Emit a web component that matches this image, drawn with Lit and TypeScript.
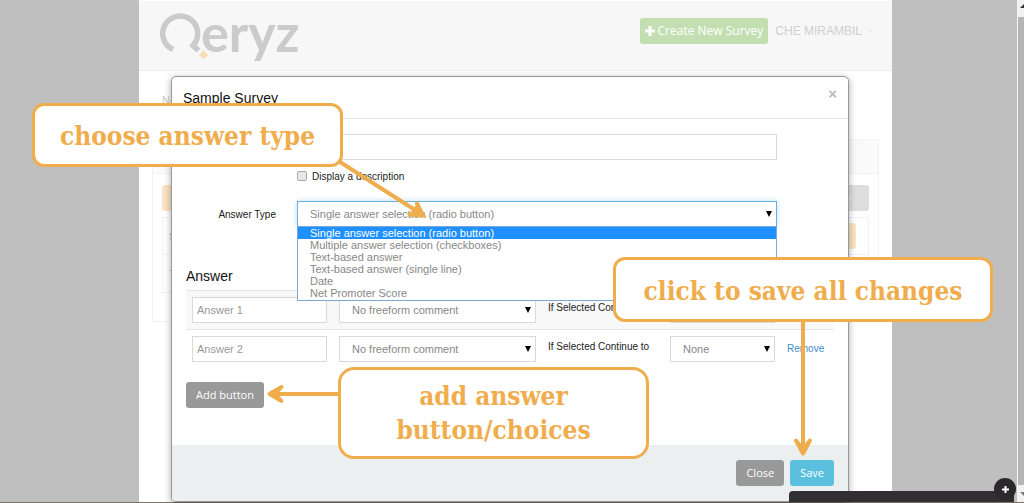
import { LitElement, html, css } from "lit";
import { customElement, state, property } from "lit/decorators.js";

const ANSWER_TYPES = [
  "Single answer selection (radio button)",
  "Multiple answer selection (checkboxes)",
  "Text-based answer",
  "Text-based answer (single line)",
  "Date",
  "Net Promoter Score",
];

const base = css`
  *, *::before, *::after { box-sizing: border-box; }
  button, input, select { font: inherit; margin: 0; }
  .field {
    display: block;
    width: 100%;
    height: 26px;
    padding: 0 4px;
    border: 1px solid #d9d9d9;
    border-radius: 0;
    background: #fff;
    color: #888;
    font-size: 11px;
    outline: none;
  }
  .field::placeholder { color: #999; opacity: 1; }
  .pick { position: relative; }
  .pick select { appearance: none; padding: 0 20px 0 12px; }
  .pick::after {
    content: "";
    position: absolute;
    right: 5px;
    top: 10px;
    border: 3px solid transparent;
    border-top: 6px solid #000;
    border-bottom: 0;
  }
`;

@customElement("survey-logo")
export class SurveyLogo extends LitElement {
  static styles = css`
    :host { display: block; }
    svg { display: block; overflow: visible; }
    .word { font: 700 52px/60px Lato, sans-serif; fill: #cbcbcb; }
  `;
  render() {
    return html`<svg width="144" height="60" viewBox="0 0 144 60" role="img" aria-label="Qeryz">
      <path d="M14 40.500 A17.500 17.500 0 1 1 34 36.500 L39.500 41.500" fill="none" stroke="#cbcbcb" stroke-width="5.500" />
      <text class="word" x="42" y="43">eryz</text>
      <path d="M44.500 41.500L49 46L44.500 50.500L40 46z" fill="#fbdcb4" />
    </svg>`;
  }
}

@customElement("answer-row")
export class AnswerRow extends LitElement {
  @property({ type: Number }) index = 1;
  @property({ type: Boolean }) removable = false;
  static styles = [base, css`
    :host {
      display: grid;
      grid-template-columns: 135px 197px 110px 105px 1fr;
      column-gap: 12px;
      align-items: center;
      height: 39px;
      padding: 0 6px;
      font-size: 10px;
      color: #222;
      white-space: nowrap;
    }
    :host([striped]) {
      background: #f8f8f8;
      box-shadow: inset 0 1px #e6e6e6, 0 1px #e6e6e6;
    }
    .goto { padding-bottom: 4px; }
    a { color: #428bca; text-decoration: none; }
  `];
  render() {
    const n = this.index;
    return html`
      <input class="field" type="text" placeholder="Answer ${n}" aria-label="Answer ${n}" />
      <div class="pick"><select class="field" aria-label="Comment for answer ${n}"><option>No freeform comment</option></select></div>
      <label class="goto" for="next">If Selected Continue to</label>
      <div class="pick"><select class="field" id="next"><option>None</option></select></div>
      ${this.removable ? html`<a href="#remove">Remove</a>` : null}`;
  }
}

@customElement("app-root")
export class AppRoot extends LitElement {
  @state() private chosen = 0;

  static styles = [base, css`
    :host {
      display: block;
      position: relative;
      min-height: 100vh;
      overflow: hidden;
      font-family: "Liberation Sans", Arial, sans-serif;
      background: #bfbfbf;
    }
    .frame {
      display: grid;
      grid-template-columns: 139fr 753fr 125fr 7px;
      min-height: 100vh;
      border-bottom: 1px solid #79736c;
    }
    .page { grid-column: 2; position: relative; background: #fff; }
    .top {
      display: flex;
      align-items: center;
      gap: 7px;
      height: 71px;
      padding: 0 18px 10px 20px;
      background: #f7f7f7;
      border-top: 1px solid #fff;
      border-bottom: 1px solid #ececec;
    }
    .logo { margin-right: auto; padding-top: 16px; }
    .create {
      display: flex;
      align-items: center;
      gap: 3px;
      height: 26px;
      padding: 0 5px;
      border: 0;
      border-radius: 3px;
      background: #c3dfb1;
      color: #fff;
      font: 12px "Open Sans", sans-serif;
      white-space: nowrap;
    }
    .user {
      display: flex;
      align-items: center;
      gap: 5px;
      color: #cfcfcf;
      font-size: 12px;
      text-decoration: none;
      white-space: nowrap;
    }
    .crumb { margin: 0; padding: 22px 23px; font-size: 11px; line-height: 14px; color: #c8c8c8; }
    .panel { margin: 10px 13px 0; border: 1px solid #f2f2f2; height: 183px; }
    .strip { height: 34px; background: #fafafa; border-bottom: 1px solid #f2f2f2; }
    .bar { display: flex; justify-content: space-between; padding: 11px 9px 6px; }
    .chip {
      width: 60px;
      height: 26px;
      padding-right: 18px;
      border-radius: 3px;
      background: #fbe3c3;
      color: #f8f8f8;
      font: 11px/26px "Open Sans", sans-serif;
      text-align: right;
    }
    .chip.grey { background: #dedede; }
    .line {
      display: flex;
      align-items: center;
      justify-content: space-between;
      height: 38px;
      margin: 0 9px;
      padding: 0 12px 0 6px;
      border: 1px solid #f2f2f2;
      font-size: 11px;
      color: #c0c0c0;
    }
    .line + .line { border-top: 0; }
    .scroll {
      grid-column: 4;
      display: flex;
      flex-direction: column;
      justify-content: space-between;
      border-left: 1px solid #f5f5f5;
      background: #b5b5b5;
    }
    .cap { display: block; width: 6px; height: 17px; background: #f1f1f1; }

    .modal {
      position: absolute;
      top: 76px;
      left: 32px;
      right: 43px;
      border: 1px solid #999;
      border-radius: 5px;
      background: #fff;
      box-shadow: 0 2px 7px rgba(0, 0, 0, .35);
      overflow: hidden;
    }
    .head {
      display: flex;
      align-items: center;
      justify-content: space-between;
      height: 42px;
      padding: 0 11px;
      border-bottom: 1px solid #e8e8e8;
    }
    .title { margin: 0; font-size: 14px; font-weight: 400; color: #111; }
    .x { padding: 0 0 8px; border: 0; background: none; font-size: 15px; font-weight: 700; line-height: 16px; color: #bbb; }
    .form {
      display: grid;
      grid-template-columns: 104px 1fr;
      column-gap: 21px;
      align-items: center;
      padding: 15px 71px 0 0;
      font-size: 10px;
      color: #222;
    }
    .form > .lab { text-align: right; }
    .check { grid-column: 2; display: flex; align-items: center; gap: 5px; height: 32px; margin-bottom: 9px; }
    .check input { width: 10px; height: 10px; appearance: none; border: 1px solid #aaa; border-radius: 2px; background: #e6e6e6; }
    .type select { border-color: #66afe9; box-shadow: 0 0 6px rgba(102, 175, 233, .4); }
    .list {
      position: absolute;
      z-index: 1;
      top: 25px;
      left: 0;
      right: 0;
      margin: 0;
      padding: 0 0 1px;
      list-style: none;
      border: 1px solid #7ba7d4;
      background: #fff;
      font-size: 11px;
      line-height: 12px;
      color: #888;
    }
    .list li { padding-left: 12px; }
    .list .on { background: #1e90ff; color: #fff; }
    .answers { padding: 41px 15px 37px 14px; }
    .answers h2 { margin: 0 0 6px; font-size: 14px; line-height: 16px; font-weight: 400; color: #111; }
    .btn {
      height: 26px;
      padding: 0 10px 1px;
      border: 0;
      border-radius: 3px;
      background: #999;
      color: #fff;
      font: 11px "Open Sans", sans-serif;
    }
    .answers .btn { display: block; margin-top: 14px; }
    .save { background: #5bc0de; }
    .foot {
      display: flex;
      justify-content: flex-end;
      gap: 6px;
      padding: 15px 14px;
      background: #ebeff0;
    }
    .dock {
      position: absolute;
      right: 10px;
      bottom: 1px;
      width: 225px;
      height: 11px;
      border-radius: 4px 0 0 0;
      background: #312f31;
    }
    .plus {
      position: absolute;
      right: 8px;
      bottom: 3px;
      width: 22px;
      height: 22px;
      padding: 0;
      border: 0;
      border-radius: 50%;
      background: #2b292b;
    }
    .plus svg { display: block; margin: 0 auto; }
    .note {
      position: absolute;
      z-index: 3;
      display: flex;
      align-items: center;
      justify-content: center;
      padding-top: 2px;
      border: 3px solid #f0ad4e;
      border-radius: 12px;
      background: #fff;
      color: #f0ad4e;
      font: 700 26px/34px "DejaVu Serif Condensed", "DejaVu Serif", serif;
      text-align: center;
      white-space: nowrap;
    }
    .n1 { left: 32px; top: 103px; width: 311px; height: 64px; }
    .n2 { left: 613px; top: 257px; width: 380px; height: 65px; }
    .n3 { left: 338px; top: 367px; width: 311px; height: 92px; padding: 0; border-radius: 16px; }
    .arrows { position: absolute; z-index: 2; top: 0; left: 0; pointer-events: none; }
  `];

  render() {
    return html`
      <div class="frame">
        <div class="page">
          <header class="top">
            <survey-logo class="logo"></survey-logo>
            <button class="create">
              <svg width="10" height="10" viewBox="0 0 10 10"><path d="M5 0v10M0 5h10" stroke="#fff" stroke-width="3" /></svg>
              Create New Survey
            </button>
            <a class="user" href="#account">CHE MIRAMBIL
              <svg width="7" height="5" viewBox="0 0 7 5"><path d="M1 1l2.500 2.500L6 1" fill="none" stroke="#d5e2f0" /></svg>
            </a>
          </header>
          <p class="crumb">Na</p>
          <section class="panel">
            <div class="strip"></div>
            <div class="bar"><span class="chip"></span><span class="chip grey">View</span></div>
            <div class="line">S<span class="chip"></span></div>
            <div class="line">T</div>
          </section>

          <section class="modal" role="dialog" aria-labelledby="title">
            <div class="head">
              <h1 class="title" id="title">Sample Survey</h1>
              <button class="x" aria-label="Close dialog">×</button>
            </div>
            <div class="form">
              <span class="lab"></span>
              <input class="field" type="text" aria-label="Question" />
              <label class="check"><input type="checkbox" />Display a description</label>
              <label class="lab" for="type">Answer Type</label>
              <div class="pick type">
                <select class="field" id="type" @change=${(e: Event) => (this.chosen = (e.target as HTMLSelectElement).selectedIndex)}>
                  ${ANSWER_TYPES.map((t) => html`<option>${t}</option>`)}
                </select>
                <ul class="list" role="listbox" aria-label="Answer types">
                  ${ANSWER_TYPES.map((t, i) => html`<li role="option" class=${i === this.chosen ? "on" : ""}>${t}</li>`)}
                </ul>
              </div>
            </div>
            <div class="answers">
              <h2>Answer</h2>
              <answer-row striped .index=${1}></answer-row>
              <answer-row .index=${2} removable></answer-row>
              <button class="btn">Add button</button>
            </div>
            <div class="foot">
              <button class="btn">Close</button>
              <button class="btn save">Save</button>
            </div>
          </section>
        </div>
        <div class="scroll">
          <svg class="cap" viewBox="0 0 6 17"><path d="M2 8l4-4v4z" fill="#333" /></svg>
          <svg class="cap" viewBox="0 0 6 17"><path d="M2 7h4v4z" fill="#777" /></svg>
        </div>
      </div>

      <div class="dock"></div>
      <button class="plus" aria-label="Expand">
        <svg width="7" height="7" viewBox="0 0 7 7"><path d="M3.500 0v7M0 3.500h7" stroke="#fff" stroke-width="2" /></svg>
      </button>

      <svg class="arrows" width="1024" height="503" viewBox="0 0 1024 503" fill="none" stroke="#f0ad4e" stroke-width="4" stroke-linecap="round">
        <path d="M340 162L419 212.500" />
        <path d="M417 203.500L423 215.500L409.500 214.500" fill="#f0ad4e" />
        <path d="M340 394H274" />
        <path d="M281.500 387L269.500 394L281.500 401L275 394z" fill="#f0ad4e" stroke-linejoin="round" />
        <path d="M803 320V449" />
        <path d="M796 440.500L803 453.500L810 440.500L803 449z" fill="#f0ad4e" stroke-linejoin="round" />
      </svg>
      <div class="note n1">choose answer type</div>
      <div class="note n2">click to save all changes</div>
      <div class="note n3">add answer<br />button/choices</div>
    `;
  }
}
